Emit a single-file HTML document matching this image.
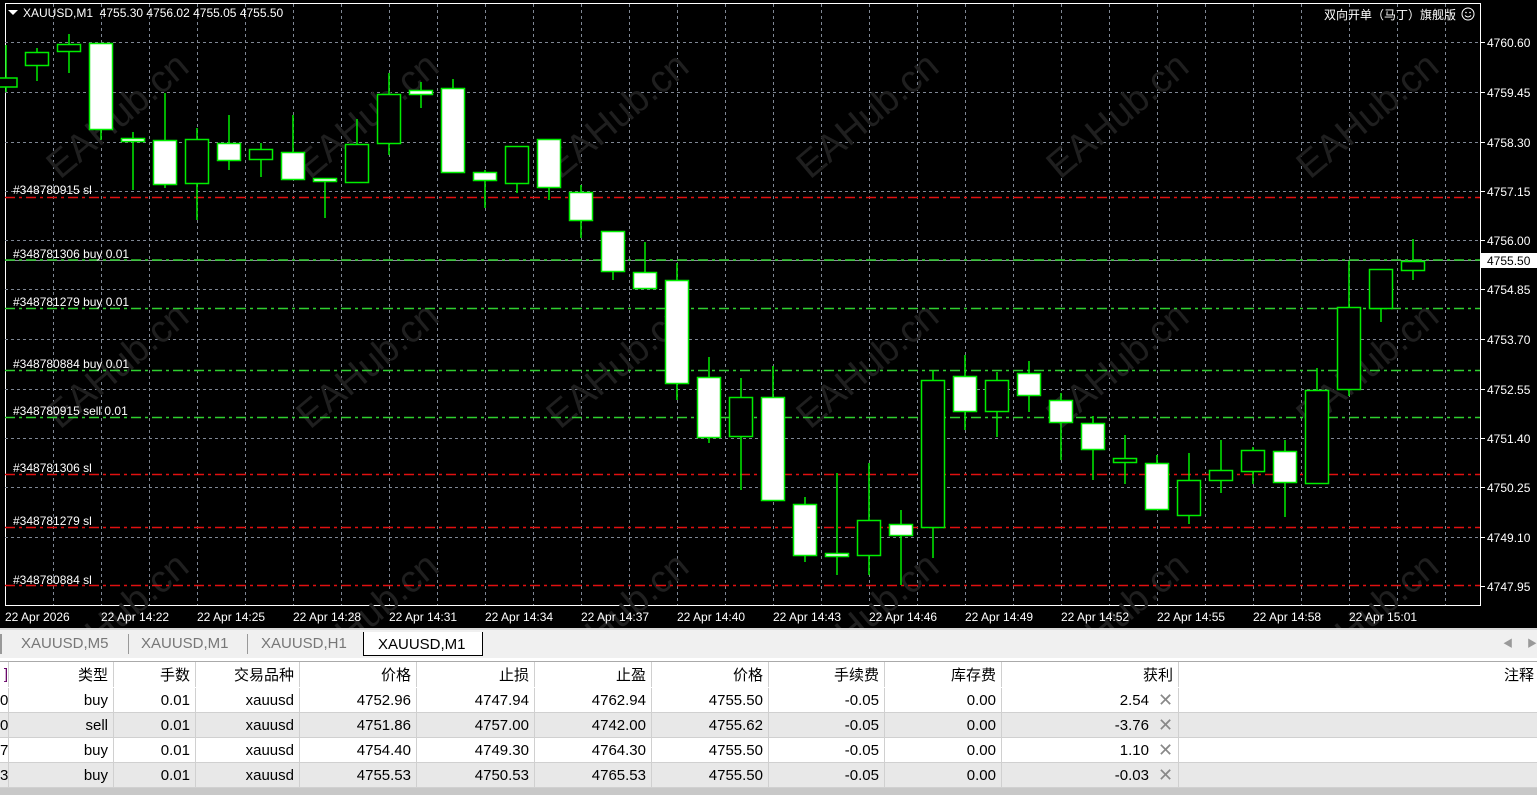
<!DOCTYPE html>
<html><head><meta charset="utf-8"><style>
*{margin:0;padding:0;box-sizing:border-box}
body{width:1537px;height:795px;overflow:hidden;background:#000;font-family:"Liberation Sans","Noto Sans CJK SC",sans-serif;position:relative}
svg{position:absolute;left:0;top:0}
.tabs{position:absolute;left:0;top:628px;width:1537px;height:30px;background:#f0f0f0;border-top:2px solid #d8d8d8}
.tab{position:absolute;top:5px;font-size:15px;color:#777}
.act{position:absolute;left:363px;top:2px;width:120px;height:24px;background:#fff;border:1px solid #000;border-top:none;font-size:15px;color:#000;padding:4px 0 0 14px}
.tbl{position:absolute;left:0;top:658px;width:1537px;height:137px;background:#fff}
.row{position:absolute;left:0;width:1537px;height:25px;border-bottom:1px solid #d0d0d0}
.c{position:absolute;top:0;height:25px;line-height:25px;font-size:15px;color:#000;text-align:right;padding-right:5px;border-right:1px solid #d0d0d0}
.x{position:absolute;left:1158px;font-size:18px;color:#888;line-height:25px;top:0}
</style></head><body>
<svg width="1537" height="628" viewBox="0 0 1537 628">
<rect x="0" y="0" width="1537" height="628" fill="#000"/>
<rect x="5.5" y="3.5" width="1475" height="602" fill="none" stroke="#fff"/>
<g stroke="#7f8794" stroke-dasharray="3,3" stroke-width="1">
<line x1="5" x2="1480" y1="42.5" y2="42.5"/><line x1="5" x2="1480" y1="92.5" y2="92.5"/><line x1="5" x2="1480" y1="142.5" y2="142.5"/><line x1="5" x2="1480" y1="191.5" y2="191.5"/><line x1="5" x2="1480" y1="240.5" y2="240.5"/><line x1="5" x2="1480" y1="289.5" y2="289.5"/><line x1="5" x2="1480" y1="339.5" y2="339.5"/><line x1="5" x2="1480" y1="389.5" y2="389.5"/><line x1="5" x2="1480" y1="438.5" y2="438.5"/><line x1="5" x2="1480" y1="487.5" y2="487.5"/><line x1="5" x2="1480" y1="537.5" y2="537.5"/>
<line y1="4" y2="605" x1="53.5" x2="53.5"/><line y1="4" y2="605" x1="101.5" x2="101.5"/><line y1="4" y2="605" x1="149.5" x2="149.5"/><line y1="4" y2="605" x1="197.5" x2="197.5"/><line y1="4" y2="605" x1="245.5" x2="245.5"/><line y1="4" y2="605" x1="293.5" x2="293.5"/><line y1="4" y2="605" x1="341.5" x2="341.5"/><line y1="4" y2="605" x1="389.5" x2="389.5"/><line y1="4" y2="605" x1="437.5" x2="437.5"/><line y1="4" y2="605" x1="485.5" x2="485.5"/><line y1="4" y2="605" x1="533.5" x2="533.5"/><line y1="4" y2="605" x1="581.5" x2="581.5"/><line y1="4" y2="605" x1="629.5" x2="629.5"/><line y1="4" y2="605" x1="677.5" x2="677.5"/><line y1="4" y2="605" x1="725.5" x2="725.5"/><line y1="4" y2="605" x1="773.5" x2="773.5"/><line y1="4" y2="605" x1="821.5" x2="821.5"/><line y1="4" y2="605" x1="869.5" x2="869.5"/><line y1="4" y2="605" x1="917.5" x2="917.5"/><line y1="4" y2="605" x1="965.5" x2="965.5"/><line y1="4" y2="605" x1="1013.5" x2="1013.5"/><line y1="4" y2="605" x1="1061.5" x2="1061.5"/><line y1="4" y2="605" x1="1109.5" x2="1109.5"/><line y1="4" y2="605" x1="1157.5" x2="1157.5"/><line y1="4" y2="605" x1="1205.5" x2="1205.5"/><line y1="4" y2="605" x1="1253.5" x2="1253.5"/><line y1="4" y2="605" x1="1301.5" x2="1301.5"/><line y1="4" y2="605" x1="1349.5" x2="1349.5"/><line y1="4" y2="605" x1="1397.5" x2="1397.5"/><line y1="4" y2="605" x1="1445.5" x2="1445.5"/>
</g>
<g font-family="Liberation Sans,sans-serif" font-size="38" fill="#1f1f1f">
<text transform="translate(60,180) rotate(-40)">EAHub.cn</text><text transform="translate(310,180) rotate(-40)">EAHub.cn</text><text transform="translate(560,180) rotate(-40)">EAHub.cn</text><text transform="translate(810,180) rotate(-40)">EAHub.cn</text><text transform="translate(1060,180) rotate(-40)">EAHub.cn</text><text transform="translate(1310,180) rotate(-40)">EAHub.cn</text>
<text transform="translate(60,430) rotate(-40)">EAHub.cn</text><text transform="translate(310,430) rotate(-40)">EAHub.cn</text><text transform="translate(560,430) rotate(-40)">EAHub.cn</text><text transform="translate(810,430) rotate(-40)">EAHub.cn</text><text transform="translate(1060,430) rotate(-40)">EAHub.cn</text><text transform="translate(1310,430) rotate(-40)">EAHub.cn</text>
<text transform="translate(60,680) rotate(-40)">EAHub.cn</text><text transform="translate(310,680) rotate(-40)">EAHub.cn</text><text transform="translate(560,680) rotate(-40)">EAHub.cn</text><text transform="translate(810,680) rotate(-40)">EAHub.cn</text><text transform="translate(1060,680) rotate(-40)">EAHub.cn</text><text transform="translate(1310,680) rotate(-40)">EAHub.cn</text>
</g>
<line x1="5" x2="1480" y1="260.5" y2="260.5" stroke="#8a8f99"/>
<g stroke-width="1.5" stroke-dasharray="10,4,3,4">
<line x1="5" x2="1480" y1="260" y2="260" stroke="#2fcf2f"/>
<line x1="5" x2="1480" y1="308.5" y2="308.5" stroke="#2fcf2f"/>
<line x1="5" x2="1480" y1="370.5" y2="370.5" stroke="#2fcf2f"/>
<line x1="5" x2="1480" y1="417.5" y2="417.5" stroke="#2fcf2f"/>
<line x1="5" x2="1480" y1="197.5" y2="197.5" stroke="#e01010"/>
<line x1="5" x2="1480" y1="474.5" y2="474.5" stroke="#e01010"/>
<line x1="5" x2="1480" y1="527.5" y2="527.5" stroke="#e01010"/>
<line x1="5" x2="1480" y1="585.5" y2="585.5" stroke="#e01010"/>
</g>
<g stroke="#00ee00" stroke-width="1.5">
<line x1="6" x2="6" y1="45" y2="92"/><line x1="37" x2="37" y1="48" y2="81"/><line x1="69" x2="69" y1="34" y2="73"/><line x1="101" x2="101" y1="43" y2="140"/><line x1="133" x2="133" y1="132" y2="190"/><line x1="165" x2="165" y1="93" y2="188"/><line x1="197" x2="197" y1="128" y2="220"/><line x1="229" x2="229" y1="115" y2="170"/><line x1="261" x2="261" y1="143" y2="177"/><line x1="293" x2="293" y1="115" y2="180"/><line x1="325" x2="325" y1="178" y2="218"/><line x1="357" x2="357" y1="119" y2="183"/><line x1="389" x2="389" y1="73" y2="155"/><line x1="421" x2="421" y1="82" y2="108"/><line x1="453" x2="453" y1="79" y2="172"/><line x1="485" x2="485" y1="170" y2="208"/><line x1="517" x2="517" y1="146" y2="193"/><line x1="549" x2="549" y1="139" y2="200"/><line x1="581" x2="581" y1="185" y2="238"/><line x1="613" x2="613" y1="231" y2="280"/><line x1="645" x2="645" y1="242" y2="288"/><line x1="677" x2="677" y1="263" y2="400"/><line x1="709" x2="709" y1="357" y2="443"/><line x1="741" x2="741" y1="378" y2="490"/><line x1="773" x2="773" y1="366" y2="500"/><line x1="805" x2="805" y1="497" y2="562"/><line x1="837" x2="837" y1="473" y2="575"/><line x1="869" x2="869" y1="463" y2="575"/><line x1="901" x2="901" y1="510" y2="585"/><line x1="933" x2="933" y1="370" y2="558"/><line x1="965" x2="965" y1="355" y2="430"/><line x1="997" x2="997" y1="372" y2="437"/><line x1="1029" x2="1029" y1="361" y2="412"/><line x1="1061" x2="1061" y1="393" y2="460"/><line x1="1093" x2="1093" y1="416" y2="480"/><line x1="1125" x2="1125" y1="435" y2="484"/><line x1="1157" x2="1157" y1="455" y2="510"/><line x1="1189" x2="1189" y1="453" y2="524"/><line x1="1221" x2="1221" y1="440" y2="493"/><line x1="1253" x2="1253" y1="447" y2="484"/><line x1="1285" x2="1285" y1="440" y2="517"/><line x1="1317" x2="1317" y1="368" y2="483"/><line x1="1349" x2="1349" y1="261" y2="396"/><line x1="1381" x2="1381" y1="269" y2="322"/><line x1="1413" x2="1413" y1="239" y2="280"/>
</g>
<g stroke="#00ee00" stroke-width="1.5">
<rect x="-6" y="78" width="23" height="9" fill="#000"/>
<rect x="25.5" y="52.5" width="23" height="13" fill="#000"/>
<rect x="57.5" y="44.5" width="23" height="7" fill="#000"/>
<rect x="89.5" y="43.5" width="23" height="86" fill="#fff"/>
<rect x="121.5" y="138.5" width="23" height="3" fill="#fff"/>
<rect x="153.5" y="140.5" width="23" height="44" fill="#fff"/>
<rect x="185.5" y="139.5" width="23" height="44" fill="#000"/>
<rect x="217.5" y="143.5" width="23" height="17" fill="#fff"/>
<rect x="249.5" y="149.5" width="23" height="10" fill="#000"/>
<rect x="281.5" y="152.5" width="23" height="27" fill="#fff"/>
<rect x="313.5" y="178.5" width="23" height="3" fill="#fff"/>
<rect x="345.5" y="144.5" width="23" height="38" fill="#000"/>
<rect x="377.5" y="94.5" width="23" height="49" fill="#000"/>
<rect x="409.5" y="90.5" width="23" height="4" fill="#fff"/>
<rect x="441.5" y="88.5" width="23" height="84" fill="#fff"/>
<rect x="473.5" y="172.5" width="23" height="8" fill="#fff"/>
<rect x="505.5" y="146.5" width="23" height="37" fill="#000"/>
<rect x="537.5" y="139.5" width="23" height="48" fill="#fff"/>
<rect x="569.5" y="192.5" width="23" height="28" fill="#fff"/>
<rect x="601.5" y="231.5" width="23" height="40" fill="#fff"/>
<rect x="633.5" y="272.5" width="23" height="16" fill="#fff"/>
<rect x="665.5" y="280.5" width="23" height="103" fill="#fff"/>
<rect x="697.5" y="377.5" width="23" height="60" fill="#fff"/>
<rect x="729.5" y="397.5" width="23" height="39" fill="#000"/>
<rect x="761.5" y="397.5" width="23" height="103" fill="#fff"/>
<rect x="793.5" y="504.5" width="23" height="51" fill="#fff"/>
<rect x="825.5" y="553.5" width="23" height="3" fill="#fff"/>
<rect x="857.5" y="520.5" width="23" height="35" fill="#000"/>
<rect x="889.5" y="524.5" width="23" height="11" fill="#fff"/>
<rect x="921.5" y="380.5" width="23" height="147" fill="#000"/>
<rect x="953.5" y="376.5" width="23" height="35" fill="#fff"/>
<rect x="985.5" y="380.5" width="23" height="31" fill="#000"/>
<rect x="1017.5" y="373.5" width="23" height="22" fill="#fff"/>
<rect x="1049.5" y="400.5" width="23" height="22" fill="#fff"/>
<rect x="1081.5" y="423.5" width="23" height="26" fill="#fff"/>
<rect x="1113.5" y="458.5" width="23" height="4" fill="#000"/>
<rect x="1145.5" y="463.5" width="23" height="46" fill="#fff"/>
<rect x="1177.5" y="480.5" width="23" height="35" fill="#000"/>
<rect x="1209.5" y="470.5" width="23" height="10" fill="#000"/>
<rect x="1241.5" y="450.5" width="23" height="21" fill="#000"/>
<rect x="1273.5" y="451.5" width="23" height="31" fill="#fff"/>
<rect x="1305.5" y="390.5" width="23" height="93" fill="#000"/>
<rect x="1337.5" y="307.5" width="23" height="82" fill="#000"/>
<rect x="1369.5" y="269.5" width="23" height="39" fill="#000"/>
<rect x="1401.5" y="261.5" width="23" height="9" fill="#000"/>
</g>
<g font-family="Liberation Sans,sans-serif" font-size="12" fill="#fff">
<polygon points="8,10 18,10 13,15" fill="#fff"/>
<text x="23" y="17" xml:space="preserve">XAUUSD,M1  4755.30 4756.02 4755.05 4755.50</text>
<text x="1324" y="19" font-family="Noto Sans CJK SC,sans-serif">双向开单（马丁）旗舰版</text>
<circle cx="1468" cy="14" r="6" fill="none" stroke="#fff"/><circle cx="1466" cy="12.5" r="0.8"/><circle cx="1470" cy="12.5" r="0.8"/><path d="M1465 15.5 Q1468 18.5 1471 15.5" fill="none" stroke="#fff"/>
<text x="13" y="194">#348780915 sl</text>
<text x="13" y="258">#348781306 buy 0.01</text>
<text x="13" y="306">#348781279 buy 0.01</text>
<text x="13" y="368">#348780884 buy 0.01</text>
<text x="13" y="415">#348780915 sell 0.01</text>
<text x="13" y="472">#348781306 sl</text>
<text x="13" y="525">#348781279 sl</text>
<text x="13" y="584">#348780884 sl</text>
<g stroke="#fff"><line x1="1480" x2="1485" y1="42.5" y2="42.5"/><line x1="1480" x2="1485" y1="92.5" y2="92.5"/><line x1="1480" x2="1485" y1="142.5" y2="142.5"/><line x1="1480" x2="1485" y1="191.5" y2="191.5"/><line x1="1480" x2="1485" y1="240.5" y2="240.5"/><line x1="1480" x2="1485" y1="289.5" y2="289.5"/><line x1="1480" x2="1485" y1="339.5" y2="339.5"/><line x1="1480" x2="1485" y1="389.5" y2="389.5"/><line x1="1480" x2="1485" y1="438.5" y2="438.5"/><line x1="1480" x2="1485" y1="487.5" y2="487.5"/><line x1="1480" x2="1485" y1="537.5" y2="537.5"/><line x1="1480" x2="1485" y1="586.5" y2="586.5"/></g>
<text x="1487" y="47">4760.60</text><text x="1487" y="97">4759.45</text><text x="1487" y="147">4758.30</text><text x="1487" y="196">4757.15</text><text x="1487" y="245">4756.00</text><text x="1487" y="294">4754.85</text><text x="1487" y="344">4753.70</text><text x="1487" y="394">4752.55</text><text x="1487" y="443">4751.40</text><text x="1487" y="492">4750.25</text><text x="1487" y="542">4749.10</text><text x="1487" y="591">4747.95</text>
<rect x="1481" y="253" width="56" height="15" fill="#fff"/>
<text x="1487" y="265" fill="#000">4755.50</text>
<text x="5" y="621">22 Apr 2026</text><text x="101" y="621">22 Apr 14:22</text><text x="197" y="621">22 Apr 14:25</text><text x="293" y="621">22 Apr 14:28</text><text x="389" y="621">22 Apr 14:31</text><text x="485" y="621">22 Apr 14:34</text><text x="581" y="621">22 Apr 14:37</text><text x="677" y="621">22 Apr 14:40</text><text x="773" y="621">22 Apr 14:43</text><text x="869" y="621">22 Apr 14:46</text><text x="965" y="621">22 Apr 14:49</text><text x="1061" y="621">22 Apr 14:52</text><text x="1157" y="621">22 Apr 14:55</text><text x="1253" y="621">22 Apr 14:58</text><text x="1349" y="621">22 Apr 15:01</text>
</g>
</svg>
<div class="tabs">
<div style="position:absolute;left:0;top:4px;width:2px;height:20px;background:#999"></div>
<span class="tab" style="left:21px">XAUUSD,M5</span>
<div style="position:absolute;left:128px;top:4px;width:1px;height:20px;background:#999"></div>
<span class="tab" style="left:141px">XAUUSD,M1</span>
<div style="position:absolute;left:247px;top:4px;width:1px;height:20px;background:#999"></div>
<span class="tab" style="left:261px">XAUUSD,H1</span>
<div class="act">XAUUSD,M1</div>
<span style="position:absolute;left:1503px;top:5px;font-size:10px;color:#999">◀</span><span style="position:absolute;left:1527px;top:5px;font-size:10px;color:#999">▶</span>
</div>
<div class="tbl">
<div class="row" style="top:3px;height:28px;border-top:1px solid #aaa">
<div class="c" style="left:0;width:9px;padding:0;color:#606">]</div><div class="c" style="left:9px;width:105px;line-height:28px">类型</div><div class="c" style="left:114px;width:82px;line-height:28px">手数</div><div class="c" style="left:196px;width:104px;line-height:28px">交易品种</div><div class="c" style="left:300px;width:117px;line-height:28px">价格</div><div class="c" style="left:417px;width:118px;line-height:28px">止损</div><div class="c" style="left:535px;width:117px;line-height:28px">止盈</div><div class="c" style="left:652px;width:117px;line-height:28px">价格</div><div class="c" style="left:769px;width:116px;line-height:28px">手续费</div><div class="c" style="left:885px;width:117px;line-height:28px">库存费</div><div class="c" style="left:1002px;width:177px;line-height:28px">获利</div><div class="c" style="left:1179px;width:358px;line-height:28px;border:none;padding-right:3px">注释</div>
</div>
<div class="row" style="top:30px;background:#fff">
<div class="c" style="left:0;width:9px;padding:0">0</div><div class="c" style="left:9px;width:105px">buy</div><div class="c" style="left:114px;width:82px">0.01</div><div class="c" style="left:196px;width:104px">xauusd</div><div class="c" style="left:300px;width:117px">4752.96</div><div class="c" style="left:417px;width:118px">4747.94</div><div class="c" style="left:535px;width:117px">4762.94</div><div class="c" style="left:652px;width:117px">4755.50</div><div class="c" style="left:769px;width:116px">-0.05</div><div class="c" style="left:885px;width:117px">0.00</div><div class="c" style="left:1002px;width:177px;padding-right:29px">2.54</div><span class="x">✕</span>
</div>
<div class="row" style="top:55px;background:#e8e8e8">
<div class="c" style="left:0;width:9px;padding:0">0</div><div class="c" style="left:9px;width:105px">sell</div><div class="c" style="left:114px;width:82px">0.01</div><div class="c" style="left:196px;width:104px">xauusd</div><div class="c" style="left:300px;width:117px">4751.86</div><div class="c" style="left:417px;width:118px">4757.00</div><div class="c" style="left:535px;width:117px">4742.00</div><div class="c" style="left:652px;width:117px">4755.62</div><div class="c" style="left:769px;width:116px">-0.05</div><div class="c" style="left:885px;width:117px">0.00</div><div class="c" style="left:1002px;width:177px;padding-right:29px">-3.76</div><span class="x">✕</span>
</div>
<div class="row" style="top:80px;background:#fff">
<div class="c" style="left:0;width:9px;padding:0">7</div><div class="c" style="left:9px;width:105px">buy</div><div class="c" style="left:114px;width:82px">0.01</div><div class="c" style="left:196px;width:104px">xauusd</div><div class="c" style="left:300px;width:117px">4754.40</div><div class="c" style="left:417px;width:118px">4749.30</div><div class="c" style="left:535px;width:117px">4764.30</div><div class="c" style="left:652px;width:117px">4755.50</div><div class="c" style="left:769px;width:116px">-0.05</div><div class="c" style="left:885px;width:117px">0.00</div><div class="c" style="left:1002px;width:177px;padding-right:29px">1.10</div><span class="x">✕</span>
</div>
<div class="row" style="top:105px;background:#e8e8e8">
<div class="c" style="left:0;width:9px;padding:0">3</div><div class="c" style="left:9px;width:105px">buy</div><div class="c" style="left:114px;width:82px">0.01</div><div class="c" style="left:196px;width:104px">xauusd</div><div class="c" style="left:300px;width:117px">4755.53</div><div class="c" style="left:417px;width:118px">4750.53</div><div class="c" style="left:535px;width:117px">4765.53</div><div class="c" style="left:652px;width:117px">4755.50</div><div class="c" style="left:769px;width:116px">-0.05</div><div class="c" style="left:885px;width:117px">0.00</div><div class="c" style="left:1002px;width:177px;padding-right:29px">-0.03</div><span class="x">✕</span>
</div>
<div style="position:absolute;left:0;top:130px;width:1537px;height:7px;background:#c8c8c8"></div>
</div>
</body></html>
